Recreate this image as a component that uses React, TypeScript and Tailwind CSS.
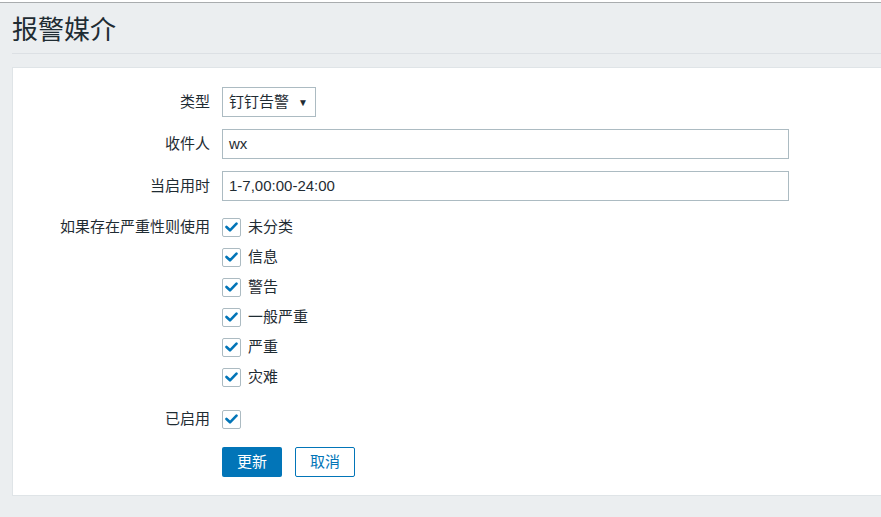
import React from "react";

const FONT = { fontFamily: '"Liberation Sans", Arial, "Noto Sans CJK SC", sans-serif' };

const SEVERITIES = ["未分类", "信息", "警告", "一般严重", "严重", "灾难"];

function Check() {
  return (
    <span className="flex h-[19px] w-[19px] shrink-0 items-center justify-center rounded-[2px] border border-[#acbbc2] bg-white">
      <svg width="13" height="10" viewBox="0 0 13 10">
        <path d="M1.5 5 L5 8.3 L11.5 1.7" fill="none" stroke="#0275b8" strokeWidth="2.6" strokeLinecap="round" strokeLinejoin="round" />
      </svg>
    </span>
  );
}

function Row({ label, children, className = "" }: { label: string; children: React.ReactNode; className?: string }) {
  return (
    <div className={`flex gap-3 ${className}`}>
      <div className="w-[197px] shrink-0 text-right leading-[30px]">{label}</div>
      <div className="flex-1">{children}</div>
    </div>
  );
}

export default function App() {
  return (
    <div style={FONT} className="h-[517px] w-[881px] overflow-hidden bg-[#ebeef0] text-[15px] text-[#1f2c33]">
      <div className="h-[2px] bg-white" />
      <div className="border-t border-[#a9acae]">
        <div className="h-[50px] px-[12px] pt-[11px]">
          <h1 className="text-[26px] leading-[33px] font-normal">报警媒介</h1>
        </div>
        <div className="ml-[12px] border-t border-[#dce0e4]" />
      </div>

      <div className="ml-[12px] mt-[13px] border-y border-l border-[#dfe4e7] bg-white pt-[19px] pb-[18px]">
        <Row label="类型">
          <div className="flex h-[30px] w-[94px] items-center justify-between border border-[#acbbc2] pl-[6px] pr-[7px]">
            <span>钉钉告警</span>
            <span className="text-[10px]">▼</span>
          </div>
        </Row>
        <Row label="收件人" className="mt-[12px]">
          <div className="flex h-[30px] w-[567px] items-center border border-[#acbbc2] px-[6px]">wx</div>
        </Row>
        <Row label="当启用时" className="mt-[12px]">
          <div className="flex h-[30px] w-[567px] items-center border border-[#acbbc2] px-[6px]">1-7,00:00-24:00</div>
        </Row>
        <Row label="如果存在严重性则使用" className="mt-[11px]">
          <ul>
            {SEVERITIES.map(s => (
              <li key={s} className="flex h-[30px] items-center gap-[7px]">
                <Check />
                <span>{s}</span>
              </li>
            ))}
          </ul>
        </Row>
        <Row label="已启用" className="mt-[12px]">
          <div className="flex h-[30px] items-center">
            <Check />
          </div>
        </Row>
        <div className="mt-[13px] flex gap-[13px] pl-[209px]">
          <button className="h-[30px] w-[60px] rounded-[2px] bg-[#0275b8] text-white">更新</button>
          <button className="h-[30px] w-[60px] rounded-[2px] border border-[#0275b8] bg-white text-[#0275b8]">取消</button>
        </div>
      </div>
    </div>
  );
}
